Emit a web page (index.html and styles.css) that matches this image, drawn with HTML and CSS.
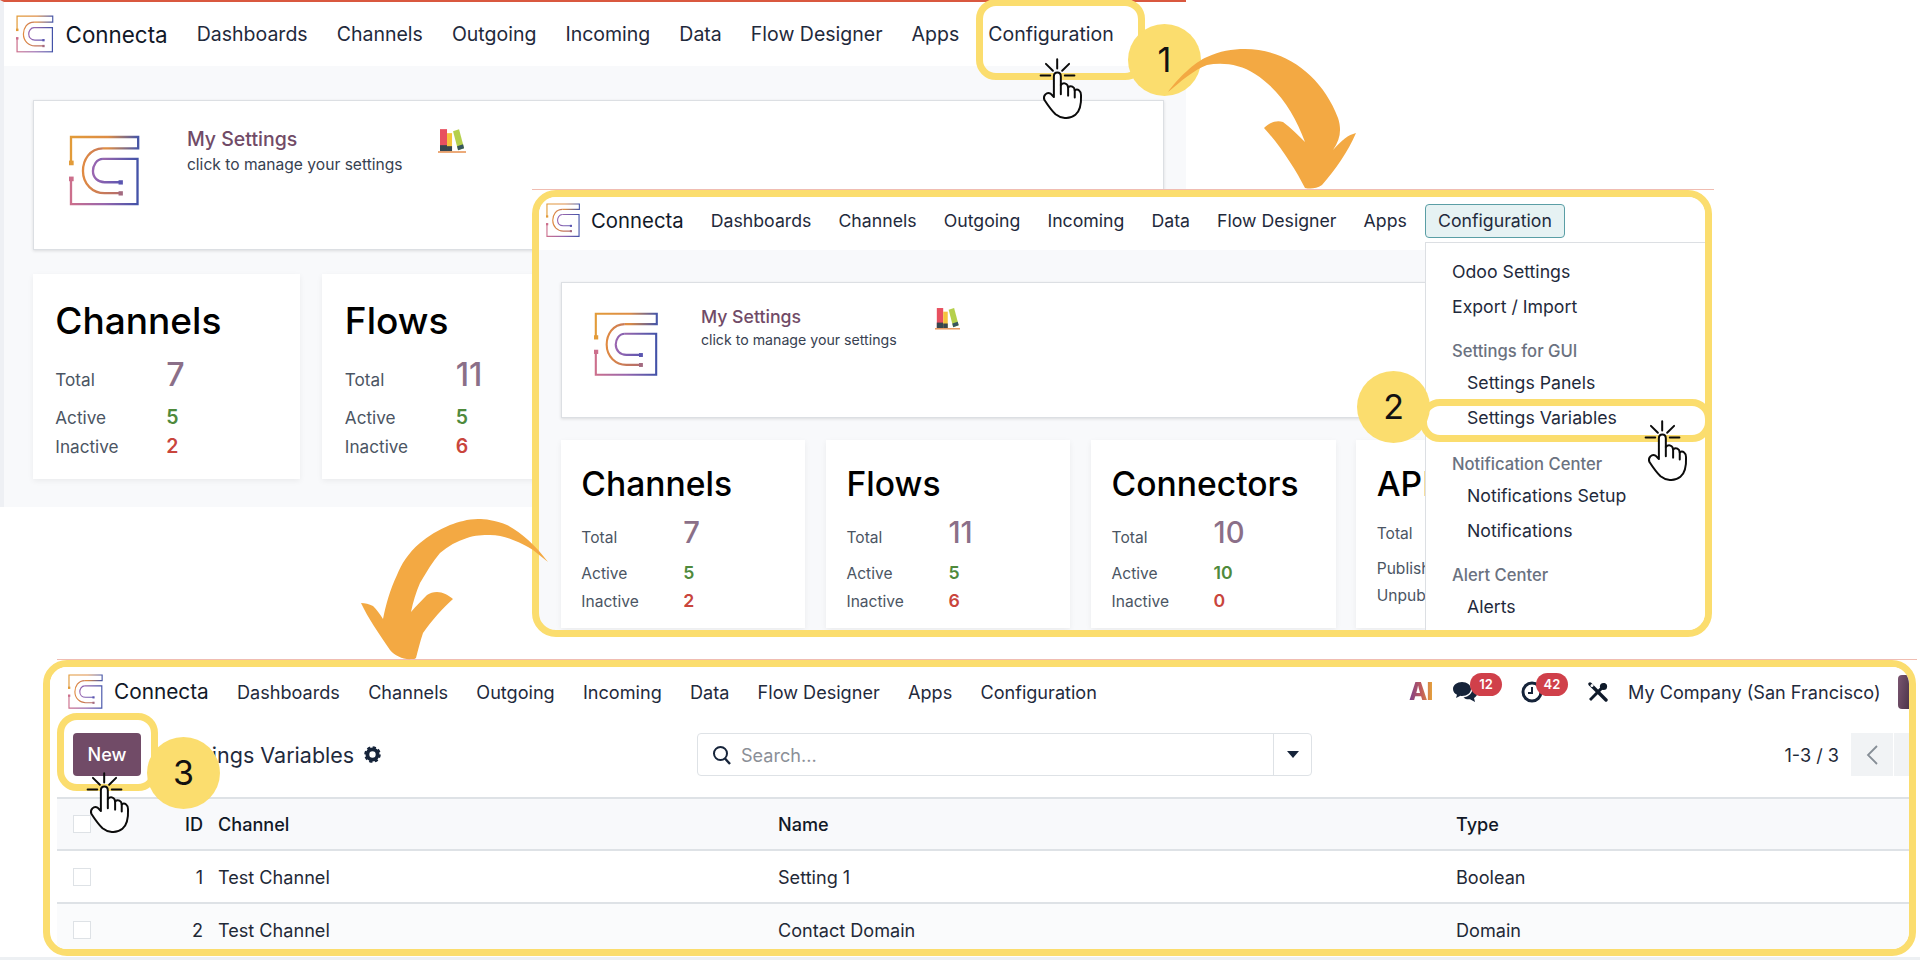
FILE: index.html
```html
<!DOCTYPE html>
<html lang="en">
  <head>
    <meta charset="UTF-8" />
    <title>Connecta - Settings Variables guide</title>
    <link rel="stylesheet" href="styles.css">
  </head>
  <body>
    <svg class="defs" width="0" height="0">
      <defs>
        <linearGradient id="gTop" gradientUnits="userSpaceOnUse" x1="94" y1="0" x2="296" y2="0">
          <stop offset="0" stop-color="#e29b39" />
          <stop offset="0.55" stop-color="#dd8c45" />
          <stop offset="1" stop-color="#4656a8" />
        </linearGradient>
        <linearGradient id="gBottom" gradientUnits="userSpaceOnUse" x1="94" y1="0" x2="296" y2="0">
          <stop offset="0" stop-color="#cc6f8c" />
          <stop offset="0.5" stop-color="#9766ad" />
          <stop offset="1" stop-color="#4252a8" />
        </linearGradient>
        <linearGradient id="gArc" gradientUnits="userSpaceOnUse" x1="130" y1="0" x2="250" y2="0">
          <stop offset="0" stop-color="#e08a42" />
          <stop offset="1" stop-color="#b06a70" />
        </linearGradient>
        <linearGradient id="gInner" gradientUnits="userSpaceOnUse" x1="160" y1="0" x2="250" y2="0">
          <stop offset="0" stop-color="#9a66b0" />
          <stop offset="1" stop-color="#5a55b0" />
        </linearGradient>
        <symbol id="logo" viewBox="88 72 214 214">
          <g fill="none" stroke-width="7">
            <path stroke="url(#gTop)" d="M94 155 V78 H296 V112 H190" />
            <path stroke="url(#gArc)" d="M190 112 C150 112 130 148 130 180 C130 220 160 247 195 247 H243" />
            <path stroke="url(#gBottom)" d="M94 203 V280 H294 V144 H190" />
            <path stroke="url(#gInner)" d="M190 144 C170 144 160 165 160 180 C160 200 175 214 195 214 H243" />
          </g>
          <rect x="88" y="149" width="14" height="14" fill="#e29b39" />
          <rect x="88" y="197" width="14" height="14" fill="#cc6f8c" />
          <rect x="237" y="208" width="13" height="13" fill="#5a55b0" />
          <rect x="237" y="241" width="13" height="13" fill="#a36a80" />
        </symbol>
        <symbol id="books" viewBox="0 0 28 25">
          <rect x="2" y="1" width="7" height="22" fill="#e8505f" />
          <rect x="2" y="17" width="7" height="6" fill="#37474f" />
          <rect x="9" y="5" width="5" height="18" fill="#f5c33b" />
          <rect x="9" y="18" width="5" height="5" fill="#37474f" />
          <path d="M15 3 L21 1 L26 20 L20 22 Z" fill="#b5d04c" />
          <path d="M19 18 L25 16 L26 20 L20 22 Z" fill="#37565f" />
          <rect x="0" y="23" width="28" height="1.6" fill="#e8965a" />
        </symbol>
        <symbol id="hand" viewBox="100 50 160 195">
          <g fill="none" stroke="#0b0b0b" stroke-width="6" stroke-linecap="round" stroke-linejoin="round">
            <path d="M170 56 V84 M136 70 L157 91 M206 70 L185 91 M120 105 H149 M193 105 H222" />
            <path fill="#fff" d="M160 170 V108 C160 92 181 92 181 108 V134 C190 124 202 130 203 141 C212 134 222 140 223 150 C232 144 243 152 242 165 C243 190 240 212 225 224 C205 240 180 234 165 222 C150 208 140 192 131 178 C127 166 138 154 150 160 Z" />
            <path d="M181 134 V162 M203 141 V166 M223 150 V172" />
          </g>
        </symbol>
      </defs>
    </svg>

    <div class="canvas">
      <!-- first screen: dashboard -->
      <section class="shot shot-a">
        <nav class="topnav">
          <svg class="brand-logo"><use href="#logo" /></svg>
          <span class="brand">Connecta</span>
          <a>Dashboards</a>
          <a>Channels</a>
          <a>Outgoing</a>
          <a>Incoming</a>
          <a>Data</a>
          <a>Flow Designer</a>
          <a>Apps</a>
          <a>Configuration</a>
        </nav>
        <main class="board">
          <div class="settings-card">
            <svg class="settings-logo"><use href="#logo" /></svg>
            <div class="settings-text">
              <div class="settings-title">My Settings</div>
              <div class="settings-sub">click to manage your settings</div>
            </div>
            <svg class="books"><use href="#books" /></svg>
          </div>
          <div class="stats">
            <div class="stat">
              <h2>Channels</h2>
              <div class="row total"><span>Total</span><b>7</b></div>
              <div class="row"><span>Active</span><b class="good">5</b></div>
              <div class="row"><span>Inactive</span><b class="bad">2</b></div>
            </div>
            <div class="stat">
              <h2>Flows</h2>
              <div class="row total"><span>Total</span><b>11</b></div>
              <div class="row"><span>Active</span><b class="good">5</b></div>
              <div class="row"><span>Inactive</span><b class="bad">6</b></div>
            </div>
          </div>
        </main>
      </section>

      <div class="redline redline-b"></div>
      <div class="redline redline-c"></div>

      <!-- second screen: configuration menu open -->
      <section class="shot shot-b">
        <nav class="topnav">
          <svg class="brand-logo"><use href="#logo" /></svg>
          <span class="brand">Connecta</span>
          <a>Dashboards</a>
          <a>Channels</a>
          <a>Outgoing</a>
          <a>Incoming</a>
          <a>Data</a>
          <a>Flow Designer</a>
          <a>Apps</a>
          <a class="open">Configuration</a>
        </nav>
        <main class="board">
          <div class="settings-card">
            <svg class="settings-logo"><use href="#logo" /></svg>
            <div class="settings-text">
              <div class="settings-title">My Settings</div>
              <div class="settings-sub">click to manage your settings</div>
            </div>
            <svg class="books"><use href="#books" /></svg>
          </div>
          <div class="stats">
            <div class="stat">
              <h2>Channels</h2>
              <div class="row total"><span>Total</span><b>7</b></div>
              <div class="row"><span>Active</span><b class="good">5</b></div>
              <div class="row"><span>Inactive</span><b class="bad">2</b></div>
            </div>
            <div class="stat">
              <h2>Flows</h2>
              <div class="row total"><span>Total</span><b>11</b></div>
              <div class="row"><span>Active</span><b class="good">5</b></div>
              <div class="row"><span>Inactive</span><b class="bad">6</b></div>
            </div>
            <div class="stat">
              <h2>Connectors</h2>
              <div class="row total"><span>Total</span><b>10</b></div>
              <div class="row"><span>Active</span><b class="good">10</b></div>
              <div class="row"><span>Inactive</span><b class="bad">0</b></div>
            </div>
            <div class="stat stat-cut">
              <h2>APIs</h2>
              <div class="row total"><span>Total</span></div>
              <div class="row"><span>Published</span></div>
              <div class="row"><span>Unpublished</span></div>
            </div>
          </div>
        </main>
        <div class="menu">
          <a>Odoo Settings</a>
          <a>Export / Import</a>
          <h4>Settings for GUI</h4>
          <a class="sub">Settings Panels</a>
          <a class="sub">Settings Variables</a>
          <h4 class="wide">Notification Center</h4>
          <a class="sub">Notifications Setup</a>
          <a class="sub">Notifications</a>
          <h4>Alert Center</h4>
          <a class="sub">Alerts</a>
        </div>
      </section>

      <!-- third screen: list view -->
      <section class="shot shot-c">
        <nav class="topnav">
          <svg class="brand-logo"><use href="#logo" /></svg>
          <span class="brand">Connecta</span>
          <a>Dashboards</a>
          <a>Channels</a>
          <a>Outgoing</a>
          <a>Incoming</a>
          <a>Data</a>
          <a>Flow Designer</a>
          <a>Apps</a>
          <a>Configuration</a>
          <div class="systray">
            <span class="ai">AI</span>
            <span class="tray-icon chat">
              <svg width="26" height="22" viewBox="0 0 26 22">
                <path fill="#16243a" d="M9 1 C4 1 0 4 0 8 C0 10.500 1.600 12.600 4 13.800 L3 17 L7.500 14.800 C8 14.900 8.500 15 9 15 C14 15 18 12 18 8 C18 4 14 1 9 1 Z" />
                <path fill="#16243a" d="M19.500 7 C19.800 12 15.500 16 10.500 16.400 C12 18 14.500 18.500 17 18.200 L22 21 L21 17 C23.500 15.500 25 13.500 24 10.500 C23.500 9 21.500 7.500 19.500 7 Z" />
              </svg>
              <em class="badge">12</em>
            </span>
            <span class="tray-icon clock">
              <svg width="22" height="22" viewBox="0 0 22 22">
                <circle cx="11" cy="11" r="9" fill="none" stroke="#16243a" stroke-width="3" />
                <path d="M11 6 V12 H7" fill="none" stroke="#16243a" stroke-width="2" />
              </svg>
              <em class="badge">42</em>
            </span>
            <svg class="tools" width="20" height="20" viewBox="0 0 20 20">
              <path d="M2 2 L18 18" stroke="#0f1a2a" stroke-width="3.400" stroke-linecap="round" />
              <path d="M16.500 1 L18.800 3.300 L3 19 L1 17 Z" fill="#0f1a2a" />
              <circle cx="15.500" cy="4.500" r="3.600" fill="#0f1a2a" />
              <circle cx="4" cy="3.500" r="1.500" fill="#fff" />
            </svg>
            <span class="company">My Company (San Francisco)</span>
            <span class="avatar"></span>
          </div>
        </nav>
        <div class="toolbar">
          <button class="btn-new">New</button>
          <div class="crumb">
            <span>Settings Variables</span>
            <svg width="17" height="17" viewBox="0 0 20 20">
              <circle cx="10" cy="10" r="6" fill="none" stroke="#16243a" stroke-width="4.500" />
              <circle cx="10" cy="10" r="8" fill="none" stroke="#16243a" stroke-width="3.500" stroke-dasharray="3.600 2.680" />
            </svg>
          </div>
          <div class="search">
            <svg width="20" height="20" viewBox="0 0 20 20">
              <circle cx="8.500" cy="8.500" r="6.500" fill="none" stroke="#16243a" stroke-width="2" />
              <path d="M13 13.500 L18 19" stroke="#16243a" stroke-width="2.400" />
            </svg>
            <span class="placeholder">Search...</span>
            <span class="caret"><i></i></span>
          </div>
          <div class="pager">
            <span>1-3 / 3</span>
            <span class="pager-btn">
              <svg width="14" height="22" viewBox="0 0 14 22">
                <path d="M12 2 L3 11 L12 20" fill="none" stroke="#868e96" stroke-width="1.800" />
              </svg>
            </span>
            <span class="pager-btn"></span>
          </div>
        </div>
        <div class="table">
          <div class="tr head">
            <span><i class="check"></i></span>
            <span class="num">ID</span>
            <span class="channel">Channel</span>
            <span>Name</span>
            <span>Type</span>
          </div>
          <div class="tr">
            <span><i class="check"></i></span>
            <span class="num">1</span>
            <span class="channel">Test Channel</span>
            <span>Setting 1</span>
            <span>Boolean</span>
          </div>
          <div class="tr tinted">
            <span><i class="check"></i></span>
            <span class="num">2</span>
            <span class="channel">Test Channel</span>
            <span>Contact Domain</span>
            <span>Domain</span>
          </div>
        </div>
      </section>

      <div class="floor"></div>

      <!-- annotations -->
      <div class="callout callout-1"></div>
      <div class="callout callout-2"></div>
      <div class="callout callout-3"></div>
      <div class="step step-1">1</div>
      <div class="step step-2">2</div>
      <div class="step step-3">3</div>

      <svg class="arrows" width="1920" height="960" viewBox="0 0 1920 960">
        <path d="M1168 92 C1178 78 1195 62 1207 57 C1220 51 1232 49 1245 49 C1285 49 1322 75 1338 118 C1342 130 1340 140 1333 150 C1342 140 1348 135 1356 133 C1348 152 1335 170 1322 185 C1316 189 1310 189 1305 188 C1296 170 1280 145 1264 128 C1270 122 1277 120 1283 122 C1291 128 1299 136 1305 142 C1295 115 1280 90 1255 74 C1240 64 1222 62 1207 65 C1195 69 1180 82 1168 92 Z" />
        <path d="M548 562 C535 545 522 533 507 525 C495 520 485 519 478 519 C468 519 458 522 450 525 C438 530 428 536 420 543 C408 553 401 565 397 575 C390 590 386 604 383 619 C380 614 377 610 373 606 C369 604 365 603 361 603 C368 618 378 632 390 650 C395 656 404 660 412 659 C414 659 415 659 416 658 C418 650 420 642 423 633 C432 620 443 608 453 599 C448 595 443 592 437 592 C433 592 430 593 427 595 C422 600 416 606 411 612 C413 602 416 592 420 583 C427 571 433 561 440 553 C448 546 457 541 467 538 C475 535 483 535 490 535 C498 535 506 537 513 540 C521 543 527 546 533 550 C538 554 543 558 548 562 Z" />
      </svg>

      <svg class="hand hand-1"><use href="#hand" /></svg>
      <svg class="hand hand-2"><use href="#hand" /></svg>
      <svg class="hand hand-3"><use href="#hand" /></svg>
    </div>
  </body>
</html>
```

FILE: styles.css
```css
* {
  box-sizing: border-box;
}
body {
  margin: 0;
  background-color: #fff;
  font-family: "Inter", "Liberation Sans", sans-serif;
  color: #1f2937;
}
.defs {
  position: absolute;
}
.canvas {
  position: relative;
  width: 1920px;
  height: 960px;
  overflow: hidden;
  background-color: #fff;
}

/* screens on the canvas */
.shot {
  position: absolute;
  overflow: hidden;
  background-color: #f8f9fb;
}
.shot-a {
  left: 0;
  top: 0;
  width: 1186px;
  height: 507px;
  font-size: 19.5px;
  --nav-gap: 1.49em;
  border-left: 4px solid #eef0f4;
  border-top: 2px solid #d9583f;
}
.shot-b {
  left: 532px;
  top: 190px;
  width: 1180px;
  height: 447px;
  font-size: 17.7px;
  --nav-gap: 1.53em;
  border: 7px solid #fbdd6e;
  border-radius: 24px;
}
.shot-c {
  left: 43px;
  top: 660px;
  width: 1873px;
  height: 296px;
  font-size: 18.1px;
  --nav-gap: 1.56em;
  background-color: #fff;
  border: 7px solid #fbdd6e;
  border-radius: 24px;
}
.redline {
  position: absolute;
  height: 1px;
  background-color: #f0bdb2;
}
.redline-b {
  left: 532px;
  top: 189px;
  width: 1182px;
}
.redline-c {
  left: 57px;
  top: 659px;
  width: 1860px;
}
.floor {
  position: absolute;
  left: 0;
  top: 957px;
  width: 1920px;
  height: 3px;
  background-color: #edf0f3;
}

/* top navigation */
.topnav {
  display: flex;
  align-items: center;
  gap: var(--nav-gap);
  background-color: #fff;
  color: #1f2a3c;
}
.topnav a {
  white-space: nowrap;
}
.shot-a .topnav {
  height: 64px;
  padding-left: 12px;
}
.shot-b .topnav {
  height: 53px;
  padding: 0 0 6px 7px;
}
.shot-c .topnav {
  height: 51px;
  padding: 0 0 2px 18px;
}
.brand-logo {
  width: 1.94em;
  height: 1.94em;
  flex: none;
  margin-right: calc(0.6em - var(--nav-gap));
}
.brand {
  font-size: 1.15em;
  color: #111827;
}
.topnav .open {
  margin-left: -0.5em;
  padding: 0 12px;
  line-height: 32px;
  background-color: #e6f2f3;
  border: 1px solid #5a9ea5;
  border-radius: 4px;
}

/* dashboard content */
.board {
  padding: 1.74em 0 0 1.48em;
}
.shot-b .board {
  padding: 1.78em 0 0 22px;
}
.settings-card {
  display: flex;
  width: 58em;
  height: 7.7em;
  background-color: #fff;
  border: 1px solid #dcdfe3;
  box-shadow: 0 1px 3px rgba(0, 0, 0, 0.12);
}
.settings-logo {
  flex: none;
  width: 3.65em;
  height: 3.65em;
  margin: 1.75em 2.4em 0 1.8em;
}
.shot-b .settings-logo {
  margin-top: 1.65em;
}
.settings-text {
  width: 12.9em;
  padding-top: 1.36em;
}
.shot-b .settings-text {
  width: 13.2em;
  padding-top: 1.26em;
}
.settings-title {
  font-weight: 500;
  color: #714b67;
  line-height: 1.3;
}
.settings-sub {
  font-size: 0.8em;
  line-height: 1.6;
  color: #374151;
}
.shot-b .settings-sub {
  margin-top: 0.1em;
}
.books {
  width: 1.44em;
  height: 1.3em;
  margin-top: 1.4em;
}
.stats {
  display: flex;
  gap: 1.13em;
  margin-top: 1.23em;
}
.shot-b .stats {
  gap: 1.18em;
}
.stat {
  flex: none;
  width: 13.72em;
  height: 10.52em;
  padding: 1.3em 0 0 1.15em;
  overflow: hidden;
  background-color: #fff;
  box-shadow: 0 2px 6px rgba(0, 0, 0, 0.06);
}
.shot-b .stat {
  width: 13.8em;
  height: 10.65em;
  padding-top: 1.37em;
}
.shot-b .stat-cut {
  width: 70px;
}
.stat h2 {
  margin: 0;
  font-size: 1.9em;
  font-weight: 500;
  line-height: 1.2;
  white-space: nowrap;
  color: #000;
}
.row {
  display: flex;
  align-items: baseline;
  line-height: 1.52em;
  color: #4b5563;
}
.row span {
  flex: none;
  width: 6.46em;
  white-space: nowrap;
  font-size: 0.88em;
}
.shot-b .row span {
  width: 6.55em;
}
.row b {
  font-weight: 600;
  font-size: 1em;
}
.row .good {
  color: #4f8a3c;
}
.row .bad {
  color: #c9453c;
}
.row.total {
  margin-top: 0.41em;
  line-height: 2.36em;
}
.shot-b .row.total {
  margin-top: 0.49em;
  line-height: 2.42em;
}
.row.total b {
  font-size: 1.65em;
  font-weight: 500;
  line-height: 1.4;
  color: #8b6f88;
}

/* configuration dropdown */
.menu {
  position: absolute;
  left: 886px;
  top: 45px;
  width: 291px;
  height: 400px;
  padding-top: 12px;
  background-color: #fff;
  border: 1px solid #dcdfe3;
  color: #1f2a3c;
}
.menu a {
  display: block;
  height: 34.5px;
  line-height: 34.5px;
  padding-left: 26px;
}
.menu .sub {
  padding-left: 41px;
}
.menu h4 {
  margin: 13px 0 0;
  height: 29px;
  line-height: 29px;
  padding-left: 26px;
  font-size: 0.94em;
  font-weight: 500;
  color: #6b7280;
}
.menu h4.wide {
  margin-top: 15px;
}

/* list view */
.toolbar {
  display: flex;
  align-items: center;
  height: 79px;
  padding: 0 0 6px 23px;
}
.btn-new {
  flex: none;
  width: 68px;
  height: 43px;
  background-color: #714b67;
  border: 0;
  border-radius: 4px;
  color: #fff;
  font: 500 18px "Inter", sans-serif;
}
.crumb {
  flex: none;
  display: flex;
  align-items: center;
  gap: 10px;
  width: 525px;
  margin-left: 31px;
  font-size: 21.5px;
  color: #1f2a3c;
}
.search {
  flex: none;
  display: flex;
  align-items: center;
  width: 615px;
  height: 43px;
  padding-left: 14px;
  background-color: #fff;
  border: 1px solid #dee2e6;
  border-radius: 4px;
}
.placeholder {
  margin-left: 9px;
  color: #8b8f97;
}
.caret {
  display: flex;
  align-items: center;
  justify-content: center;
  width: 38px;
  height: 100%;
  margin-left: auto;
  border-left: 1px solid #dee2e6;
}
.caret i {
  border: 6px solid transparent;
  border-top: 7px solid #16243a;
  border-bottom: 0;
}
.pager {
  display: flex;
  align-items: center;
  margin-left: auto;
  gap: 1px;
}
.pager > span:first-child {
  margin-right: 11px;
}
.pager-btn {
  display: flex;
  align-items: center;
  justify-content: center;
  width: 42px;
  height: 43px;
  background-color: #f1f3f5;
}
.pager-btn:last-child {
  width: 15px;
  border-radius: 0;
}
.table {
  margin-left: 7px;
}
.tr {
  display: grid;
  grid-template-columns: 53px 93px 575px 678px 1fr;
  align-items: center;
  height: 53px;
  border-bottom: 2px solid #dee2e6;
}
.tr.head {
  height: 54px;
  border-top: 2px solid #dee2e6;
  background-color: #f8f9fb;
  font-weight: 500;
  color: #111827;
}
.tr.tinted {
  background-color: #fafbfc;
}
.num {
  text-align: right;
}
.channel {
  padding-left: 15px;
}
.check {
  display: block;
  width: 18px;
  height: 18px;
  margin-left: 16px;
  background-color: #fff;
  border: 1px solid #dee2e6;
}

/* systray */
.systray {
  display: flex;
  align-items: center;
  margin-left: auto;
  color: #1f2a3c;
}
.ai {
  width: 44px;
  font-size: 24px;
  font-weight: 800;
  letter-spacing: -1px;
  color: transparent;
  background: linear-gradient(90deg, #7b3f8c 0%, #c05a5a 28%, #e8a83a 55%);
  -webkit-background-clip: text;
  background-clip: text;
}
.tray-icon {
  position: relative;
  display: block;
  height: 22px;
}
.chat {
  width: 68px;
}
.clock {
  width: 67px;
}
.badge {
  position: absolute;
  left: 17px;
  top: -8px;
  width: 32px;
  height: 23px;
  border-radius: 12px;
  background-color: #d0404a;
  color: #fff;
  font-size: 13px;
  font-style: normal;
  font-weight: 600;
  line-height: 23px;
  text-align: center;
}
.clock .badge {
  left: 15px;
}
.tools {
  flex: none;
  margin-right: 20px;
}
.company {
  width: 270px;
  white-space: nowrap;
}
.avatar {
  flex: none;
  width: 24px;
  height: 34px;
  margin-right: -13px;
  border-radius: 4px;
  background: linear-gradient(100deg, #7a5570 0%, #4a3448 60%, #30242f 100%);
}

/* guide annotations */
.callout {
  position: absolute;
  border: 7px solid #fbdd6e;
  border-radius: 20px;
}
.callout-1 {
  left: 976px;
  top: -1px;
  width: 169px;
  height: 81px;
}
.callout-2 {
  left: 1420px;
  top: 399px;
  width: 292px;
  height: 43px;
}
.callout-3 {
  left: 57px;
  top: 713px;
  width: 101px;
  height: 78px;
}
.step {
  position: absolute;
  width: 73px;
  height: 72px;
  border-radius: 50%;
  background-color: #fbdd6e;
  color: #111;
  font-size: 34px;
  line-height: 72px;
  text-align: center;
}
.step-1 {
  left: 1128px;
  top: 24px;
}
.step-2 {
  left: 1357px;
  top: 371px;
}
.step-3 {
  left: 147px;
  top: 737px;
}
.arrows {
  position: absolute;
  left: 0;
  top: 0;
  fill: #f3a943;
}
.hand {
  position: absolute;
  width: 53px;
  height: 65px;
}
.hand-1 {
  left: 1034px;
  top: 57px;
}
.hand-2 {
  left: 1639px;
  top: 419px;
}
.hand-3 {
  left: 81px;
  top: 771px;
}
```
